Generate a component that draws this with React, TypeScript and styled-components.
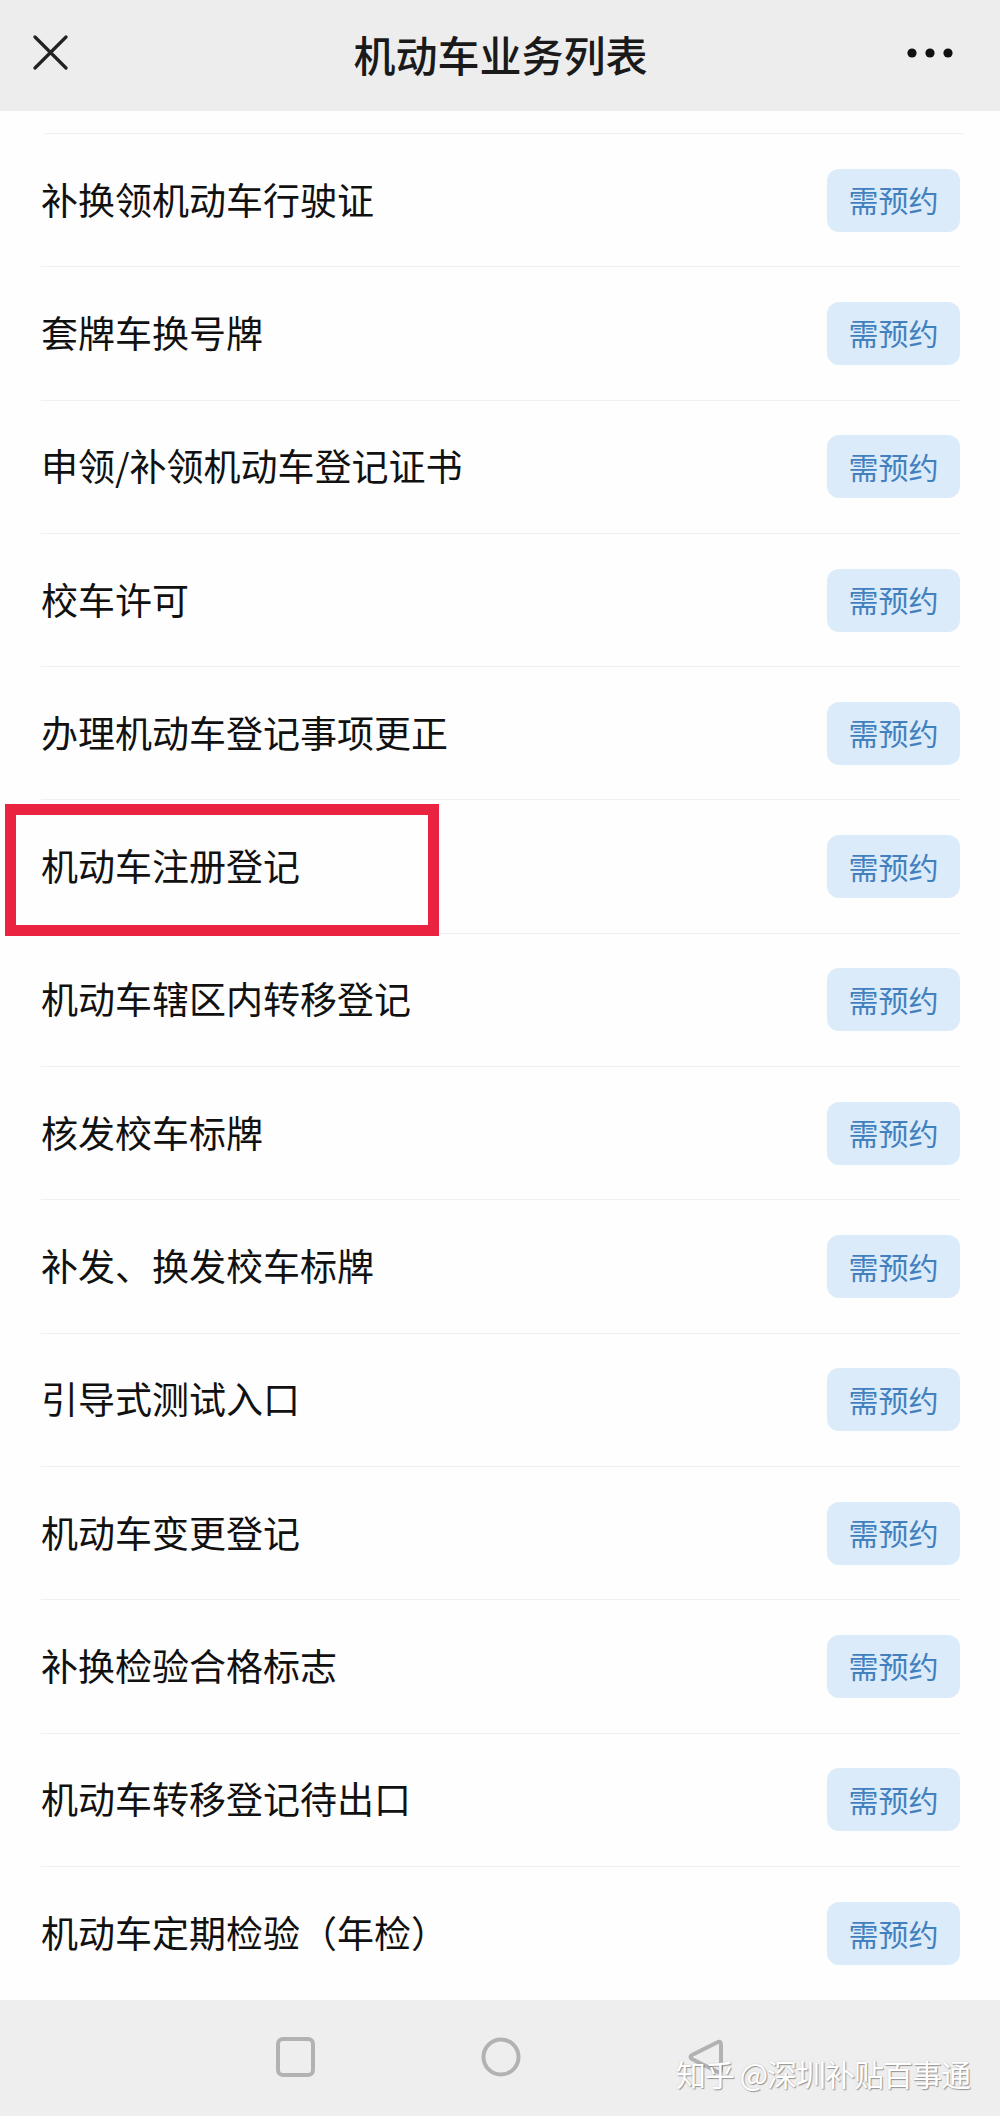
import React from "react";
import styled, { createGlobalStyle } from "styled-components";

const GlobalStyle = createGlobalStyle`
  html, body {
    margin: 0;
    padding: 0;
    background: #ffffff;
  }
  body {
    font-family: "Noto Sans CJK SC", "Noto Sans", sans-serif;
    -webkit-font-smoothing: antialiased;
  }
  * { box-sizing: border-box; }
`;

const Page = styled.div`
  width: 1000px;
  height: 2116px;
  display: flex;
  flex-direction: column;
  background: #fefefe;
  overflow: hidden;
`;

const Header = styled.header`
  height: 111px;
  flex: 0 0 111px;
  background: #ededed;
  display: grid;
  grid-template-columns: 120px 1fr 120px;
  align-items: center;
  padding: 0 0 0 33px;
`;

const Title = styled.h1`
  margin: 0;
  font-size: 42px;
  font-weight: 500;
  color: #1a1a1a;
  text-align: center;
  line-height: 1;
  letter-spacing: 0;
  transform: translateX(-16px);
  padding-bottom: 4px;
`;

const IconButton = styled.div<{ $align?: "start" | "end" }>`
  display: flex;
  align-items: center;
  justify-content: ${(p) => (p.$align === "end" ? "flex-end" : "flex-start")};
  padding-right: ${(p) => (p.$align === "end" ? "47px" : "0")};
  height: 100%;
  padding-bottom: 6px;
`;

const TopGap = styled.div`
  height: 23px;
  flex: 0 0 23px;
  margin: 0 37px 0 45px;
  border-bottom: 1px solid #efefef;
`;

const List = styled.ul`
  list-style: none;
  margin: 0;
  padding: 0 40px 0 41px;
  flex: 1 1 auto;
`;

const Row = styled.li`
  position: relative;
  height: 133.3px;
  display: flex;
  align-items: center;
  justify-content: space-between;
  border-bottom: 1px solid #f0f0f0;
  &:last-child {
    border-bottom: none;
  }
`;

const RowLabel = styled.span`
  font-size: 37px;
  font-weight: 400;
  color: #111111;
  line-height: 1;
  padding-bottom: 2px;
`;

const Badge = styled.span`
  width: 133px;
  height: 63px;
  border-radius: 12px;
  background: #dcebfa;
  color: #4281be;
  font-size: 30px;
  font-weight: 400;
  display: flex;
  align-items: center;
  justify-content: center;
  line-height: 1;
  padding-bottom: 2px;
`;

const Highlight = styled.div`
  position: absolute;
  top: 4px;
  left: -36px;
  width: 434px;
  height: 132px;
  border: 11px solid #ea2340;
  pointer-events: none;
`;

const NavBar = styled.nav`
  position: relative;
  height: 118px;
  flex: 0 0 118px;
  background: #eeeeee;
  display: flex;
  align-items: center;
  padding: 0 0 4px 276px;
  gap: 166px;
`;

const NavIcon = styled.svg`
  display: block;
  flex: 0 0 auto;
`;

const Watermark = styled.div`
  position: absolute;
  left: 676px;
  top: 58px;
  font-size: 30px;
  line-height: 1;
  color: #ffffff;
  letter-spacing: -1px;
  text-shadow: 1px 1px 1px rgba(0, 0, 0, 0.35), 0 0 2px rgba(0, 0, 0, 0.15);
  white-space: nowrap;
`;

const items = [
  "补换领机动车行驶证",
  "套牌车换号牌",
  "申领/补领机动车登记证书",
  "校车许可",
  "办理机动车登记事项更正",
  "机动车注册登记",
  "机动车辖区内转移登记",
  "核发校车标牌",
  "补发、换发校车标牌",
  "引导式测试入口",
  "机动车变更登记",
  "补换检验合格标志",
  "机动车转移登记待出口",
  "机动车定期检验（年检）",
];

export default function App() {
  return (
    <>
      <GlobalStyle />
      <Page>
        <Header>
          <IconButton>
            <svg width="35" height="35" viewBox="0 0 35 35">
              <path
                d="M2 2 L33 33 M33 2 L2 33"
                stroke="#222"
                strokeWidth="3.2"
                strokeLinecap="round"
                fill="none"
              />
            </svg>
          </IconButton>
          <Title>机动车业务列表</Title>
          <IconButton $align="end">
            <svg width="46" height="10" viewBox="0 0 46 10">
              <circle cx="5" cy="5" r="4.6" fill="#111" />
              <circle cx="23" cy="5" r="4.6" fill="#111" />
              <circle cx="41" cy="5" r="4.6" fill="#111" />
            </svg>
          </IconButton>
        </Header>
        <TopGap />
        <List>
          {items.map((label) => (
            <Row key={label}>
              <RowLabel>{label}</RowLabel>
              <Badge>需预约</Badge>
              {label === "机动车注册登记" && <Highlight />}
            </Row>
          ))}
        </List>
        <NavBar>
          <NavIcon width="39" height="40" viewBox="0 0 39 40">
            <rect
              x="2"
              y="2"
              width="35"
              height="36"
              rx="5"
              stroke="#b2b2b2"
              strokeWidth="4"
              fill="none"
            />
          </NavIcon>
          <NavIcon width="40" height="40" viewBox="0 0 40 40">
            <circle cx="20" cy="20" r="17.5" stroke="#b2b2b2" strokeWidth="4" fill="none" />
          </NavIcon>
          <NavIcon width="38" height="38" viewBox="0 0 38 38">
            <path
              d="M31 4 Q34 3 34 7 L34 31 Q34 35 31 34 L5 21 Q2 19 5 17 Z"
              stroke="#b2b2b2"
              strokeWidth="4"
              strokeLinejoin="round"
              fill="none"
            />
          </NavIcon>
          <Watermark>知乎 @深圳补贴百事通</Watermark>
        </NavBar>
      </Page>
    </>
  );
}
